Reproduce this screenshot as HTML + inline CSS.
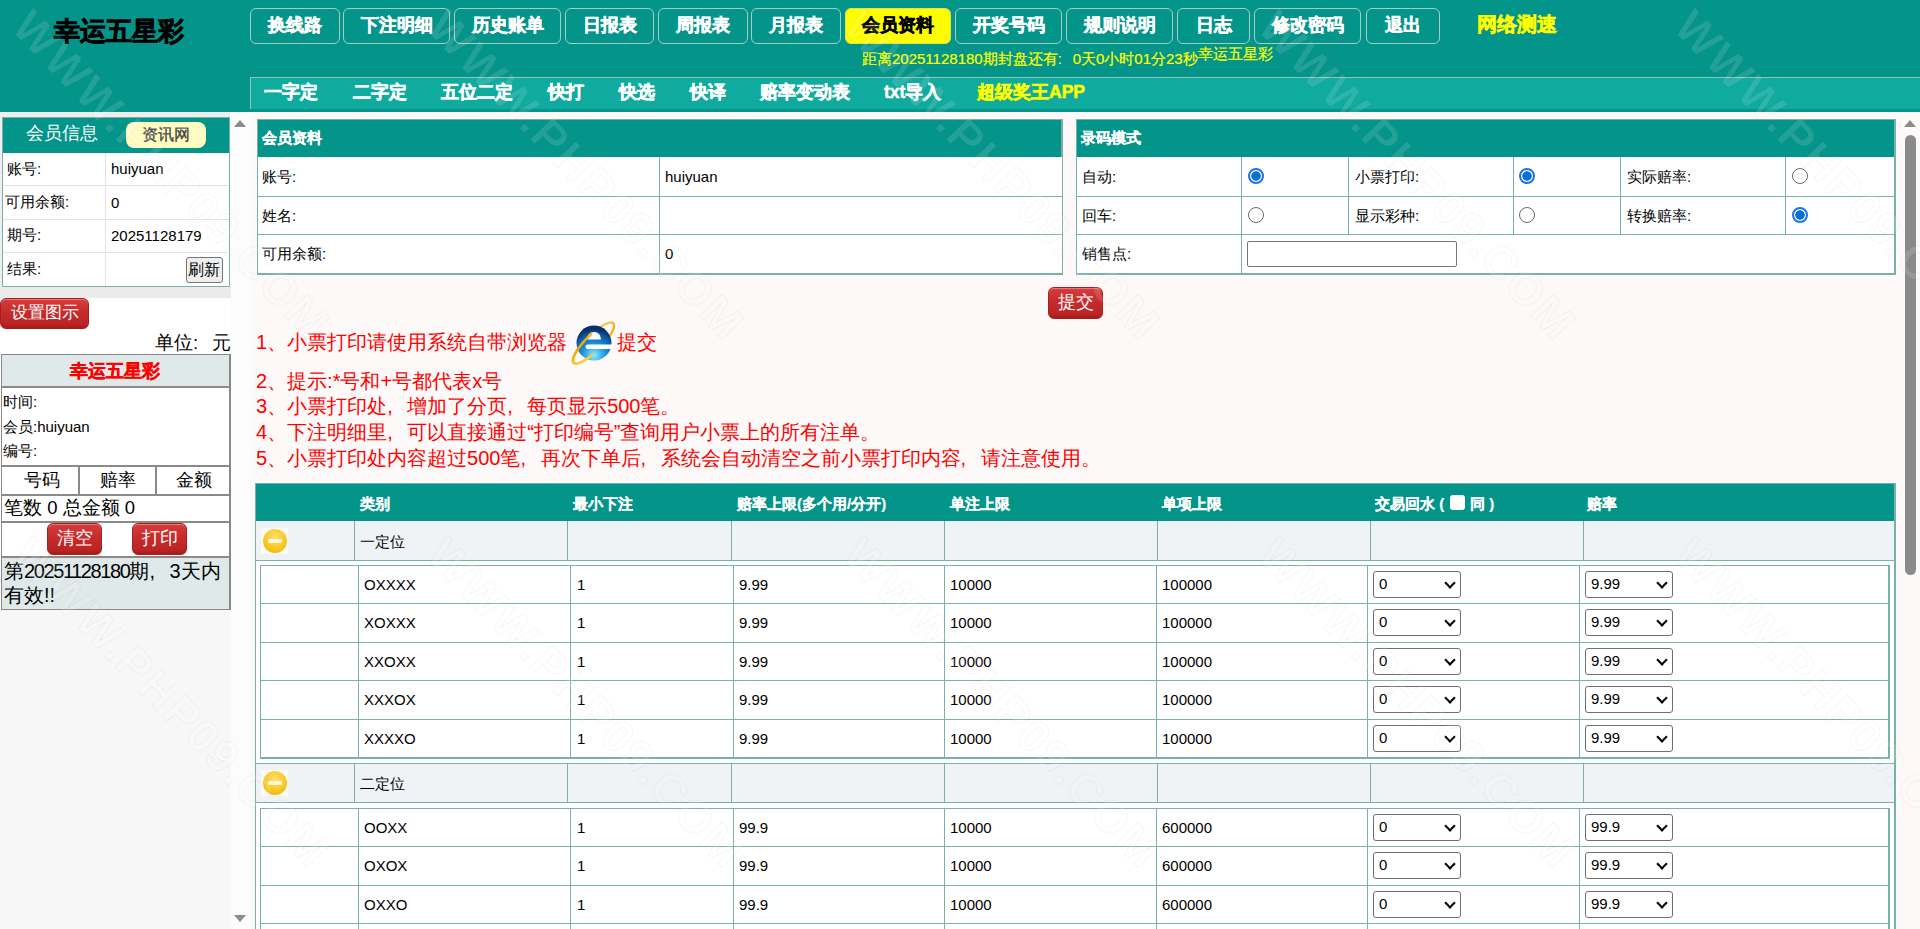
<!DOCTYPE html>
<html><head><meta charset="utf-8">
<style>
*{box-sizing:border-box}
html,body{margin:0;padding:0}
body{width:1920px;height:929px;overflow:hidden;position:relative;background:#fdf9f8;font-family:"Liberation Sans",sans-serif;color:#000}
.abs{position:absolute}
#hdr{position:absolute;left:0;top:0;width:1920px;height:112px;background:#03948a}
#logo{position:absolute;left:54px;top:15px;font-size:26px;font-weight:bold;line-height:32px;color:#000;letter-spacing:0}
.nb{position:absolute;top:8px;height:36px;border:1px solid #a9cbc4;border-radius:6px;color:#fff;font-weight:bold;font-size:17.5px;line-height:33px;text-align:center}
.nb.on{background:#fdfd00;color:#000;border-color:#e0e060}
#speed{position:absolute;left:1477px;top:11px;font-size:20px;font-weight:bold;color:#ffff00;line-height:26px}
#mq{position:absolute;left:862px;top:50px;font-size:15px;color:#ffff00;-webkit-text-stroke:0.2px #ffff00;line-height:18px;white-space:nowrap}
#mq span{position:relative;top:-5px}
#sub{position:absolute;left:250px;top:77px;width:1670px;height:32px;background:#0fab9f;border-top:1px solid #97c2bb;border-left:1px solid #97c2bb}
.si{position:absolute;top:2px;font-size:17.5px;font-weight:bold;color:#fff;line-height:24px;white-space:nowrap}
.si.y{color:#ffff00}
#left{position:absolute;left:0;top:112px;width:230px;height:817px;background:#f7f7f7}
#lsb{position:absolute;left:231px;top:112px;width:19px;height:817px;background:#fdfcfc}
.arr-up{position:absolute;width:0;height:0;border-left:6.5px solid transparent;border-right:6.5px solid transparent;border-bottom:7px solid #8c8c8c}
.arr-dn{position:absolute;width:0;height:0;border-left:6.5px solid transparent;border-right:6.5px solid transparent;border-top:7px solid #8c8c8c}

.lt{position:absolute;font-size:15px;line-height:18px;white-space:nowrap;color:#000}
.hl{position:absolute;height:1px}
.vl{position:absolute;width:1px}
.rbtn{position:absolute;border-radius:6px;color:#fff;text-align:center;background:linear-gradient(#d83a3a,#c52a2a 50%,#b92222);border:1px solid #a81e1e;box-shadow:inset 0 1px 1px rgba(255,255,255,.35),inset 0 -2px 2px rgba(0,0,0,.12)}

.bd{background:#7ab0aa}
.tt{position:absolute;font-size:15px;line-height:18px;white-space:nowrap;color:#000}
.th{position:absolute;font-size:15px;line-height:18px;white-space:nowrap;color:#fff;font-weight:bold}
.radio{position:absolute;width:16px;height:16px;border-radius:50%;border:1.5px solid #6a6a6a;background:#fff}
.radio.c{border:2px solid #1a73e8;background:radial-gradient(circle,#0b6fd8 0,#0b6fd8 4.4px,#fff 5px)}
.sel{position:absolute;width:88px;height:27px;border:1.5px solid #6f6f6f;border-radius:3px;background:#fff}
.sel span{position:absolute;left:5px;top:3px;font-size:15px;line-height:18px}
.sel i{position:absolute;right:6px;top:7px;width:8px;height:8px;border-right:2.2px solid #000;border-bottom:2.2px solid #000;transform:rotate(45deg)}
.mi{position:absolute;width:27px;height:26px;background:#fbfbf8}
.mi b{position:absolute;left:2px;top:1px;width:24px;height:24px;border-radius:50%;background:radial-gradient(circle at 50% 35%,#ffe070,#f9c51c 60%,#eaa800)}
.mi b:after{content:"";position:absolute;left:5px;top:10px;width:14px;height:4px;background:#fff7d6;border-radius:1px}
.red{position:absolute;font-size:20px;line-height:24px;color:#f00;white-space:nowrap}

.nb,.si,#speed{-webkit-text-stroke:0.5px currentColor}
.th{-webkit-text-stroke:0.2px currentColor}
#logo{-webkit-text-stroke:0.8px #000}

.wm{position:absolute;font-family:"Liberation Sans",sans-serif;font-size:46px;font-weight:bold;line-height:46px;letter-spacing:2.2px;white-space:nowrap;color:rgba(255,255,255,0.13);-webkit-text-stroke:1px rgba(0,0,0,0.06);transform-origin:0 0;transform:rotate(46.3deg);pointer-events:none}
.fc{display:inline-block;width:1em}
</style></head>
<body>
<div id="hdr">
  <div id="logo">幸运五星彩</div>
  <div class="nb" style="left:250px;width:90px">换线路</div>
  <div class="nb" style="left:343px;width:107px">下注明细</div>
  <div class="nb" style="left:454px;width:107px">历史账单</div>
  <div class="nb" style="left:565px;width:89px">日报表</div>
  <div class="nb" style="left:658px;width:90px">周报表</div>
  <div class="nb" style="left:751px;width:90px">月报表</div>
  <div class="nb on" style="left:845px;width:106px">会员资料</div>
  <div class="nb" style="left:955px;width:107px">开奖号码</div>
  <div class="nb" style="left:1066px;width:107px">规则说明</div>
  <div class="nb" style="left:1177px;width:73px">日志</div>
  <div class="nb" style="left:1254px;width:107px">修改密码</div>
  <div class="nb" style="left:1366px;width:74px">退出</div>
  <div id="speed">网络测速</div>
  <div id="mq">距离20251128180期封盘还有<span style="display:inline-block;width:15px;position:static">:</span>0天0小时01分23秒<span>幸运五星彩</span></div>
  <div id="sub">
    <div class="si" style="left:13px">一字定</div>
    <div class="si" style="left:102px">二字定</div>
    <div class="si" style="left:190px">五位二定</div>
    <div class="si" style="left:297px">快打</div>
    <div class="si" style="left:368px">快选</div>
    <div class="si" style="left:439px">快译</div>
    <div class="si" style="left:509px">赔率变动表</div>
    <div class="si" style="left:633px">txt导入</div>
    <div class="si y" style="left:726px">超级奖王APP</div>
  </div>
</div>
<div id="left">
  <div class="abs" style="left:0;top:0;width:230px;height:186px;background:#eeeeee"></div>
  <div class="abs" style="left:2px;top:5px;width:228px;height:170px;border:1px solid #7ab0aa;background:#fff">
    <div class="abs" style="left:0;top:0;width:226px;height:35px;background:#03948a"></div>
    <div class="lt" style="left:23px;top:4px;font-size:17.5px;line-height:22px;color:#fff">会员信息</div>
    <div class="abs" style="left:123px;top:4px;width:80px;height:26px;background:#fffcc2;border-radius:8px"></div>
    <div class="lt" style="left:139px;top:6px;font-size:16px;line-height:22px;color:#444;-webkit-text-stroke:0.3px #444">资讯网</div>
    <div class="hl" style="left:0;top:67px;width:226px;background:#e3e3e3"></div>
    <div class="hl" style="left:0;top:101px;width:226px;background:#e3e3e3"></div>
    <div class="hl" style="left:0;top:134px;width:226px;background:#e3e3e3"></div>
    <div class="vl" style="left:102px;top:35px;height:133px;background:#e3e3e3"></div>
    <div class="lt" style="left:4px;top:42px">账号:</div>
    <div class="lt" style="left:108px;top:42px">huiyuan</div>
    <div class="lt" style="left:2px;top:75px">可用余额:</div>
    <div class="lt" style="left:108px;top:76px">0</div>
    <div class="lt" style="left:4px;top:108px">期号:</div>
    <div class="lt" style="left:108px;top:109px">20251128179</div>
    <div class="lt" style="left:4px;top:142px">结果:</div>
    <div class="abs" style="left:183px;top:139px;width:37px;height:26px;background:#efefef;border:1px solid #767676;border-radius:3px"></div>
    <div class="lt" style="left:185px;top:143px;font-size:16px">刷新</div>
  </div>
  <div class="abs" style="left:0;top:175px;width:231px;height:11px;background:#ebebeb"></div>
  <div class="abs" style="left:0;top:186px;width:231px;height:311px;background:#fff"></div>
  <div class="rbtn" style="left:0;top:186px;width:89px;height:31px;font-size:17px;line-height:28px">设置图示</div>
  <div class="lt" style="left:155px;top:220px;font-size:18.5px;line-height:22px">单位<span style="display:inline-block;width:18.5px">:</span>元</div>
  <div class="abs" style="left:1px;top:242px;width:230px;height:256px;border:2px solid #888;border-top-width:1px;border-left-width:1px;background:#fff">
    <div class="abs" style="left:0;top:0;width:227px;height:33px;background:#dfe9e9;border-bottom:2px solid #8a8a8a"></div>
    <div class="lt" style="left:68px;top:5px;font-size:18px;line-height:22px;color:#f00;font-weight:bold;-webkit-text-stroke:0.4px #f00">幸运五星彩</div>
    <div class="lt" style="left:1px;top:38px">时间:</div>
    <div class="lt" style="left:1px;top:63px">会员:huiyuan</div>
    <div class="lt" style="left:1px;top:87px">编号:</div>
    <div class="hl" style="left:0;top:110px;width:227px;height:2px;background:#8a8a8a"></div>
    <div class="vl" style="left:76px;top:112px;height:27px;width:2px;background:#8a8a8a"></div>
    <div class="vl" style="left:153px;top:112px;height:27px;width:2px;background:#8a8a8a"></div>
    <div class="lt" style="left:22px;top:114px;font-size:17.5px;line-height:22px">号码</div>
    <div class="lt" style="left:98px;top:114px;font-size:17.5px;line-height:22px">赔率</div>
    <div class="lt" style="left:174px;top:114px;font-size:17.5px;line-height:22px">金额</div>
    <div class="hl" style="left:0;top:139px;width:227px;height:2px;background:#8a8a8a"></div>
    <div class="lt" style="left:2px;top:142px;font-size:18.5px;line-height:22px">笔数 0 总金额 0</div>
    <div class="hl" style="left:0;top:166px;width:227px;height:2px;background:#8a8a8a"></div>
    <div class="rbtn" style="left:45px;top:168px;width:55px;height:32px;font-size:17.5px;line-height:29px">清空</div>
    <div class="rbtn" style="left:130px;top:168px;width:55px;height:32px;font-size:17.5px;line-height:29px">打印</div>
    <div class="hl" style="left:0;top:201px;width:227px;height:2px;background:#8a8a8a"></div>
    <div class="abs" style="left:0;top:203px;width:227px;height:51px;background:#dfe9e9"></div>
    <div class="lt" style="left:2px;top:204px;font-size:20px;line-height:24px;white-space:nowrap;width:226px">第<span style="letter-spacing:-1.4px">20251128180</span>期<span style="display:inline-block;width:20px">,</span>3天内<br>有效!!</div>
  </div>
</div>
<div id="lsb">
  <div class="arr-up" style="left:3px;top:8px"></div>
  <div class="arr-dn" style="left:3px;top:803px"></div>
</div>
<div class="arr-up" style="left:1904px;top:120px"></div>
<div class="abs" style="left:1905px;top:135px;width:11px;height:440px;background:#8a8a8a;border-radius:6px"></div>
<div class="abs bd" style="left:257px;top:119px;width:806px;height:156px"></div>
<div class="abs" style="left:258px;top:120px;width:803px;height:37px;background:#03948a"></div>
<div class="abs" style="left:258px;top:157px;width:804px;height:116px;background:#fff"></div>
<div class="hl bd" style="left:258px;top:196px;width:804px"></div>
<div class="hl bd" style="left:258px;top:234px;width:804px"></div>
<div class="vl bd" style="left:659px;top:157px;height:116px"></div>
<div class="th" style="left:262px;top:129px">会员资料</div>
<div class="tt" style="left:262px;top:168px">账号:</div>
<div class="tt" style="left:665px;top:168px">huiyuan</div>
<div class="tt" style="left:262px;top:207px">姓名:</div>
<div class="tt" style="left:262px;top:245px">可用余额:</div>
<div class="tt" style="left:665px;top:245px">0</div>
<div class="abs bd" style="left:1076px;top:119px;width:820px;height:156px"></div>
<div class="abs" style="left:1077px;top:120px;width:817px;height:37px;background:#03948a"></div>
<div class="abs" style="left:1077px;top:157px;width:817px;height:116px;background:#fff"></div>
<div class="hl bd" style="left:1077px;top:196px;width:817px"></div>
<div class="hl bd" style="left:1077px;top:234px;width:817px"></div>
<div class="vl bd" style="left:1241px;top:157px;height:116px"></div>
<div class="vl bd" style="left:1348px;top:157px;height:77px"></div>
<div class="vl bd" style="left:1513px;top:157px;height:77px"></div>
<div class="vl bd" style="left:1620px;top:157px;height:77px"></div>
<div class="vl bd" style="left:1785px;top:157px;height:77px"></div>
<div class="th" style="left:1081px;top:129px">录码模式</div>
<div class="tt" style="left:1082px;top:168px">自动:</div>
<div class="radio c" style="left:1248px;top:168px"></div>
<div class="tt" style="left:1355px;top:168px">小票打印:</div>
<div class="radio c" style="left:1519px;top:168px"></div>
<div class="tt" style="left:1627px;top:168px">实际赔率:</div>
<div class="radio" style="left:1792px;top:168px"></div>
<div class="tt" style="left:1082px;top:207px">回车:</div>
<div class="radio" style="left:1248px;top:207px"></div>
<div class="tt" style="left:1355px;top:207px">显示彩种:</div>
<div class="radio" style="left:1519px;top:207px"></div>
<div class="tt" style="left:1627px;top:207px">转换赔率:</div>
<div class="radio c" style="left:1792px;top:207px"></div>
<div class="tt" style="left:1082px;top:245px">销售点:</div>
<div class="abs" style="left:1247px;top:241px;width:210px;height:26px;border:1.5px solid #767676;border-radius:2px;background:#fff"></div>
<div class="rbtn" style="left:1048px;top:287px;width:55px;height:32px;font-size:17.5px;line-height:29px">提交</div>
<div class="red" style="left:256px;top:330px">1、小票打印请使用系统自带浏览器</div>
<div class="red" style="left:617px;top:330px">提交</div>
<div class="red" style="left:256px;top:369px">2、提示:*号和+号都代表x号</div>
<div class="red" style="left:256px;top:394px">3、小票打印处<span class="fc">,</span>增加了分页<span class="fc">,</span>每页显示500笔。</div>
<div class="red" style="left:256px;top:420px">4、下注明细里<span class="fc">,</span>可以直接通过“打印编号”查询用户小票上的所有注单。</div>
<div class="red" style="left:256px;top:446px">5、小票打印处内容超过500笔<span class="fc">,</span>再次下单后<span class="fc">,</span>系统会自动清空之前小票打印内容<span class="fc">,</span>请注意使用。</div>
<svg class="abs" style="left:565px;top:318px" width="55" height="50" viewBox="0 0 55 50">
<defs><radialGradient id="ieg" cx="50%" cy="85%" r="75%"><stop offset="0" stop-color="#8ee8ff"/><stop offset=".45" stop-color="#1c93d9"/><stop offset=".8" stop-color="#0c5aa6"/><stop offset="1" stop-color="#0a2f6a"/></radialGradient>
<linearGradient id="ring" x1="0" y1="1" x2="1" y2="0"><stop offset="0" stop-color="#ffe36a"/><stop offset=".35" stop-color="#f4b400"/><stop offset=".7" stop-color="#f0a800"/><stop offset="1" stop-color="#f8dc80"/></linearGradient>
<clipPath id="ieul"><polygon points="68.9,-19.9 -12.9,67.9 -56.8,27 25,-60.8"/></clipPath></defs>
<ellipse cx="28.5" cy="25" rx="28" ry="8" transform="rotate(-45 28.5 25)" fill="none" stroke="url(#ring)" stroke-width="2.3" opacity=".9"/>
<circle cx="29" cy="25" r="17.5" fill="url(#ieg)"/>
<path d="M22 21.5 Q22.5 14 29 14 Q35.5 14 36 21.5 Z" fill="#fff"/>
<path d="M23 26.5 H48 V31 H23 Q20.5 31 20.5 28.75 Q20.5 26.5 23 26.5Z" fill="#fff"/>
<ellipse cx="28.5" cy="25" rx="28" ry="8" transform="rotate(-45 28.5 25)" fill="none" stroke="url(#ring)" stroke-width="2.5" clip-path="url(#ieul)"/>
</svg>
<div class="abs bd" style="left:255px;top:483px;width:1641px;height:446px"></div>
<div class="abs" style="left:256px;top:484px;width:1638px;height:37px;background:#03948a"></div>
<div class="abs" style="left:256px;top:521px;width:1638px;height:408px;background:#fff"></div>
<div class="th" style="left:360px;top:495px">类别</div>
<div class="th" style="left:573px;top:495px">最小下注</div>
<div class="th" style="left:737px;top:495px">赔率上限(多个用/分开)</div>
<div class="th" style="left:950px;top:495px">单注上限</div>
<div class="th" style="left:1162px;top:495px">单项上限</div>
<div class="th" style="left:1375px;top:495px">交易回水 (<span style="display:inline-block;width:26px"></span>同 )</div>
<div class="th" style="left:1587px;top:495px">赔率</div>
<div class="abs" style="left:1450px;top:495px;width:15px;height:15px;background:#fff;border-radius:3px"></div>
<div class="abs" style="left:256px;top:521px;width:1638px;height:39px;background:#eff3f6"></div>
<div class="hl bd" style="left:256px;top:560px;width:1638px"></div>
<div class="vl bd" style="left:354px;top:521px;height:39px"></div>
<div class="vl bd" style="left:567px;top:521px;height:39px"></div>
<div class="vl bd" style="left:731px;top:521px;height:39px"></div>
<div class="vl bd" style="left:944px;top:521px;height:39px"></div>
<div class="vl bd" style="left:1157px;top:521px;height:39px"></div>
<div class="vl bd" style="left:1370px;top:521px;height:39px"></div>
<div class="vl bd" style="left:1583px;top:521px;height:39px"></div>
<div class="mi" style="left:261px;top:528px"><b></b></div>
<div class="tt" style="left:360px;top:533px">一定位</div>
<div class="abs bd" style="left:260px;top:565px;width:1630px;height:194px"></div>
<div class="abs" style="left:261px;top:566px;width:1627px;height:191px;background:#fff"></div>
<div class="hl bd" style="left:261px;top:603px;width:1627px"></div>
<div class="hl bd" style="left:261px;top:642px;width:1627px"></div>
<div class="hl bd" style="left:261px;top:680px;width:1627px"></div>
<div class="hl bd" style="left:261px;top:719px;width:1627px"></div>
<div class="vl bd" style="left:358px;top:565px;height:192px"></div>
<div class="vl bd" style="left:570px;top:565px;height:192px"></div>
<div class="vl bd" style="left:733px;top:565px;height:192px"></div>
<div class="vl bd" style="left:944px;top:565px;height:192px"></div>
<div class="vl bd" style="left:1156px;top:565px;height:192px"></div>
<div class="vl bd" style="left:1367px;top:565px;height:192px"></div>
<div class="vl bd" style="left:1579px;top:565px;height:192px"></div>
<div class="tt" style="left:364px;top:576px">OXXXX</div>
<div class="tt" style="left:577px;top:576px">1</div>
<div class="tt" style="left:739px;top:576px">9.99</div>
<div class="tt" style="left:950px;top:576px">10000</div>
<div class="tt" style="left:1162px;top:576px">100000</div>
<div class="sel" style="left:1373px;top:571px"><span>0</span><i></i></div>
<div class="sel" style="left:1585px;top:571px"><span>9.99</span><i></i></div>
<div class="tt" style="left:364px;top:614px">XOXXX</div>
<div class="tt" style="left:577px;top:614px">1</div>
<div class="tt" style="left:739px;top:614px">9.99</div>
<div class="tt" style="left:950px;top:614px">10000</div>
<div class="tt" style="left:1162px;top:614px">100000</div>
<div class="sel" style="left:1373px;top:609px"><span>0</span><i></i></div>
<div class="sel" style="left:1585px;top:609px"><span>9.99</span><i></i></div>
<div class="tt" style="left:364px;top:653px">XXOXX</div>
<div class="tt" style="left:577px;top:653px">1</div>
<div class="tt" style="left:739px;top:653px">9.99</div>
<div class="tt" style="left:950px;top:653px">10000</div>
<div class="tt" style="left:1162px;top:653px">100000</div>
<div class="sel" style="left:1373px;top:648px"><span>0</span><i></i></div>
<div class="sel" style="left:1585px;top:648px"><span>9.99</span><i></i></div>
<div class="tt" style="left:364px;top:691px">XXXOX</div>
<div class="tt" style="left:577px;top:691px">1</div>
<div class="tt" style="left:739px;top:691px">9.99</div>
<div class="tt" style="left:950px;top:691px">10000</div>
<div class="tt" style="left:1162px;top:691px">100000</div>
<div class="sel" style="left:1373px;top:686px"><span>0</span><i></i></div>
<div class="sel" style="left:1585px;top:686px"><span>9.99</span><i></i></div>
<div class="tt" style="left:364px;top:730px">XXXXO</div>
<div class="tt" style="left:577px;top:730px">1</div>
<div class="tt" style="left:739px;top:730px">9.99</div>
<div class="tt" style="left:950px;top:730px">10000</div>
<div class="tt" style="left:1162px;top:730px">100000</div>
<div class="sel" style="left:1373px;top:725px"><span>0</span><i></i></div>
<div class="sel" style="left:1585px;top:725px"><span>9.99</span><i></i></div>
<div class="abs" style="left:256px;top:763px;width:1638px;height:39px;background:#eff3f6"></div>
<div class="hl bd" style="left:256px;top:763px;width:1638px"></div>
<div class="hl bd" style="left:256px;top:802px;width:1638px"></div>
<div class="vl bd" style="left:354px;top:763px;height:39px"></div>
<div class="vl bd" style="left:567px;top:763px;height:39px"></div>
<div class="vl bd" style="left:731px;top:763px;height:39px"></div>
<div class="vl bd" style="left:944px;top:763px;height:39px"></div>
<div class="vl bd" style="left:1157px;top:763px;height:39px"></div>
<div class="vl bd" style="left:1370px;top:763px;height:39px"></div>
<div class="vl bd" style="left:1583px;top:763px;height:39px"></div>
<div class="mi" style="left:261px;top:770px"><b></b></div>
<div class="tt" style="left:360px;top:775px">二定位</div>
<div class="abs bd" style="left:260px;top:808px;width:1630px;height:156px"></div>
<div class="abs" style="left:261px;top:809px;width:1627px;height:153px;background:#fff"></div>
<div class="hl bd" style="left:261px;top:846px;width:1627px"></div>
<div class="hl bd" style="left:261px;top:885px;width:1627px"></div>
<div class="hl bd" style="left:261px;top:923px;width:1627px"></div>
<div class="vl bd" style="left:358px;top:808px;height:154px"></div>
<div class="vl bd" style="left:570px;top:808px;height:154px"></div>
<div class="vl bd" style="left:733px;top:808px;height:154px"></div>
<div class="vl bd" style="left:944px;top:808px;height:154px"></div>
<div class="vl bd" style="left:1156px;top:808px;height:154px"></div>
<div class="vl bd" style="left:1367px;top:808px;height:154px"></div>
<div class="vl bd" style="left:1579px;top:808px;height:154px"></div>
<div class="tt" style="left:364px;top:819px">OOXX</div>
<div class="tt" style="left:577px;top:819px">1</div>
<div class="tt" style="left:739px;top:819px">99.9</div>
<div class="tt" style="left:950px;top:819px">10000</div>
<div class="tt" style="left:1162px;top:819px">600000</div>
<div class="sel" style="left:1373px;top:814px"><span>0</span><i></i></div>
<div class="sel" style="left:1585px;top:814px"><span>99.9</span><i></i></div>
<div class="tt" style="left:364px;top:857px">OXOX</div>
<div class="tt" style="left:577px;top:857px">1</div>
<div class="tt" style="left:739px;top:857px">99.9</div>
<div class="tt" style="left:950px;top:857px">10000</div>
<div class="tt" style="left:1162px;top:857px">600000</div>
<div class="sel" style="left:1373px;top:852px"><span>0</span><i></i></div>
<div class="sel" style="left:1585px;top:852px"><span>99.9</span><i></i></div>
<div class="tt" style="left:364px;top:896px">OXXO</div>
<div class="tt" style="left:577px;top:896px">1</div>
<div class="tt" style="left:739px;top:896px">99.9</div>
<div class="tt" style="left:950px;top:896px">10000</div>
<div class="tt" style="left:1162px;top:896px">600000</div>
<div class="sel" style="left:1373px;top:891px"><span>0</span><i></i></div>
<div class="sel" style="left:1585px;top:891px"><span>99.9</span><i></i></div>
<div class="tt" style="left:364px;top:934px">XOOX</div>
<div class="tt" style="left:577px;top:934px">1</div>
<div class="tt" style="left:739px;top:934px">99.9</div>
<div class="tt" style="left:950px;top:934px">10000</div>
<div class="tt" style="left:1162px;top:934px">600000</div>
<div class="sel" style="left:1373px;top:929px"><span>0</span><i></i></div>
<div class="sel" style="left:1585px;top:929px"><span>99.9</span><i></i></div>
<div class="wm" style="left:37.5px;top:2px">WWW.PHP09.COM</div>
<div class="wm" style="left:453.0px;top:2px">WWW.PHP09.COM</div>
<div class="wm" style="left:868.5px;top:2px">WWW.PHP09.COM</div>
<div class="wm" style="left:1284.0px;top:2px">WWW.PHP09.COM</div>
<div class="wm" style="left:1699.5px;top:2px">WWW.PHP09.COM</div>
<div class="wm" style="left:37.5px;top:530px">WWW.PHP09.COM</div>
<div class="wm" style="left:453.0px;top:530px">WWW.PHP09.COM</div>
<div class="wm" style="left:868.5px;top:530px">WWW.PHP09.COM</div>
<div class="wm" style="left:1284.0px;top:530px">WWW.PHP09.COM</div>
<div class="wm" style="left:1699.5px;top:530px">WWW.PHP09.COM</div>
</body></html>
